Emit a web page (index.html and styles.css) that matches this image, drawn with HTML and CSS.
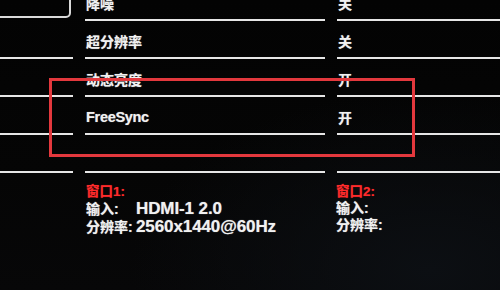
FILE: index.html
```html
<!DOCTYPE html>
<html lang="zh-CN">
<head>
<meta charset="utf-8">
<title>OSD</title>
<link rel="stylesheet" href="styles.css">
</head>
<body>
<div class="screen">
  <div class="menu">
    <div class="cell side"><div class="tab"></div></div>
    <div class="cell label line">降噪</div>
    <div class="cell value line">关</div>

    <div class="cell side line"></div>
    <div class="cell label line">超分辨率</div>
    <div class="cell value line">关</div>

    <div class="cell side line"></div>
    <div class="cell label line">动态亮度</div>
    <div class="cell value line">开</div>

    <div class="cell side line"></div>
    <div class="cell label line latin">FreeSync</div>
    <div class="cell value line">开</div>

    <div class="cell side line"></div>
    <div class="cell label line"></div>
    <div class="cell value line"></div>
  </div>

  <div class="info">
    <div class="spacer"></div>
    <div class="win">
      <div class="win-title">窗口1:</div>
      <div class="kv"><span class="k">输入:</span><span class="v">HDMI-1 2.0</span></div>
      <div class="kv"><span class="k">分辨率:</span><span class="v">2560x1440@60Hz</span></div>
    </div>
    <div class="win">
      <div class="win-title">窗口2:</div>
      <div class="kv"><span class="k">输入:</span><span class="v"></span></div>
      <div class="kv"><span class="k">分辨率:</span><span class="v"></span></div>
    </div>
  </div>

  <div class="highlight"></div>
</div>
</body>
</html>
```

FILE: styles.css
```css
html, body {
  margin: 0;
  padding: 0;
}
body {
  width: 500px;
  height: 290px;
  overflow: hidden;
  background: #050505;
  font-family: "Liberation Sans", "Noto Sans CJK SC", sans-serif;
  color: #f1f1f1;
}
.screen {
  position: relative;
  width: 500px;
  height: 290px;
  overflow: hidden;
  background:
    radial-gradient(ellipse 300px 180px at 430px 270px, #0c0f13 0%, rgba(12,15,19,0) 100%),
    linear-gradient(180deg, #030303 0%, #050505 60%, #070708 100%);
}
.menu {
  display: grid;
  grid-template-columns: 73px 240px 175px;
  column-gap: 12px;
  grid-auto-rows: 38px;
  margin-top: -17px;
}
.cell {
  box-sizing: border-box;
  display: flex;
  align-items: center;
  padding-top: 4px;
  font-size: 14px;
  font-weight: 700;
  text-shadow: 0 0 1px rgba(255,255,255,0.6);
}
.line {
  border-bottom: 2px solid #e6e6e6;
}
.label {
  padding-left: 1px;
}
.latin {
  font-size: 14.5px;
  letter-spacing: -0.3px;
}
.value {
  padding-left: 1px;
}
.side {
  align-items: stretch;
  padding-top: 0;
}
.tab {
  flex: 1;
  margin: 0 2px 3px -10px;
  border: 2px solid #d9d9d9;
  border-radius: 5px;
}
.info {
  display: grid;
  grid-template-columns: 73px 238px 175px;
  column-gap: 12px;
  margin-top: 10px;
  font-weight: 700;
  text-shadow: 0 0 1px rgba(255,255,255,0.6);
}
.win {
  display: flex;
  flex-direction: column;
  padding-left: 1px;
}
.win-title {
  color: #ff2b2b;
  font-size: 13.5px;
  line-height: 17px;
  text-shadow: 0 0 1px rgba(255,40,40,0.6);
}
.kv {
  display: flex;
  align-items: baseline;
  line-height: 17px;
}
.k {
  width: 50px;
  font-size: 14px;
}
.v {
  font-size: 17px;
  line-height: 17px;
  letter-spacing: -0.1px;
}
.highlight {
  position: absolute;
  left: 49px;
  top: 78px;
  width: 360px;
  height: 73px;
  border: 3px solid #e3383d;
}
```
